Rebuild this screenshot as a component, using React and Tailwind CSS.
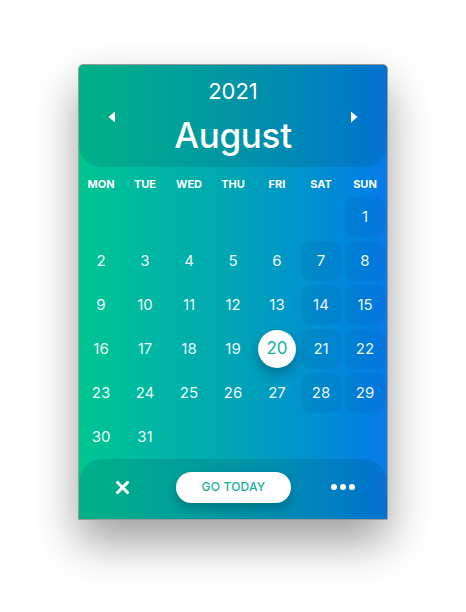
import React from "react";

const labels = ["MON", "TUE", "WED", "THU", "FRI", "SAT", "SUN"];

function buildCells() {
  const cells = [];
  for (let i = 0; i < 6; i++) cells.push(null);
  for (let d = 1; d <= 31; d++) cells.push(d);
  while (cells.length < 42) cells.push(null);
  return cells;
}

export default function App() {
  const cells = buildCells();
  return (
    <div className="min-h-[612px] w-[466px] bg-white pt-[64px]" style={{ fontFamily: "Inter, 'Noto Sans', sans-serif" }}>
      <div className="mx-auto w-[310px] overflow-hidden rounded-t-[5px] border border-[#9a9a9a] bg-linear-to-r from-[#00c690] via-[#03a5b4] to-[#0a7ae8] shadow-[0_22px_45px_rgba(0,0,0,0.38)]">
        {/* Header */}
        <div className="flex items-center justify-between rounded-b-[22px] bg-[#003a40]/15 px-[29px] pt-[12px] pb-[10px] text-white">
          <svg width="8" height="12" viewBox="0 0 8 12"><path d="M7 0.5 L0.5 6 L7 11.5 Z" fill="white" /></svg>
          <div className="flex flex-col items-center">
            <div className="text-[22px] leading-[28px]">2021</div>
            <div className="mt-[8px] text-[35px] font-medium leading-[44px] tracking-[-0.3px]">August</div>
          </div>
          <svg width="8" height="12" viewBox="0 0 8 12"><path d="M1 0.5 L7.5 6 L1 11.5 Z" fill="white" /></svg>
        </div>
        {/* Labels */}
        <div className="grid grid-cols-7 pt-[10px] pb-[4px]">
          {labels.map((l) => (
            <div key={l} className="text-center text-[11px] font-bold leading-[14px] text-white">{l}</div>
          ))}
        </div>
        {/* Days */}
        <div className="grid grid-cols-7">
          {cells.map((d, i) => {
            const col = i % 7;
            const weekend = d !== null && col >= 5;
            const today = d === 20;
            return (
              <div key={i} className="flex h-[44px] items-center justify-center p-[2px]">
                {d !== null && (
                  today ? (
                    <div className="flex h-[38px] w-[38px] items-center justify-center rounded-full bg-white text-[17px] text-[#13b29c] shadow-[0_6px_12px_rgba(0,40,60,0.35)]">20</div>
                  ) : (
                    <div className={"flex h-full w-full items-center justify-center rounded-[9px] text-[15px] text-white/95 " + (weekend ? "bg-[#003070]/[0.08]" : "")}>
                      {d}
                    </div>
                  )
                )}
              </div>
            );
          })}
        </div>
        {/* Footer */}
        <div className="flex h-[60px] items-center justify-between rounded-t-[24px] bg-[#003a40]/15 pb-[4px] pl-[37px] pr-[32px]">
          <svg width="13" height="13" viewBox="0 0 13 13"><path d="M1.5 1.5 L11.5 11.5 M11.5 1.5 L1.5 11.5" stroke="white" strokeWidth="3" strokeLinecap="square" /></svg>
          <button className="ml-[7px] h-[31px] w-[115px] rounded-full bg-white text-[12px] font-medium tracking-[0.2px] text-[#17ae9e] shadow-[0_5px_10px_rgba(0,40,60,0.3)]">GO TODAY</button>
          <div className="flex gap-[3px]">
            <span className="h-[6px] w-[6px] rounded-full bg-white"></span>
            <span className="h-[6px] w-[6px] rounded-full bg-white"></span>
            <span className="h-[6px] w-[6px] rounded-full bg-white"></span>
          </div>
        </div>
      </div>
    </div>
  );
}
